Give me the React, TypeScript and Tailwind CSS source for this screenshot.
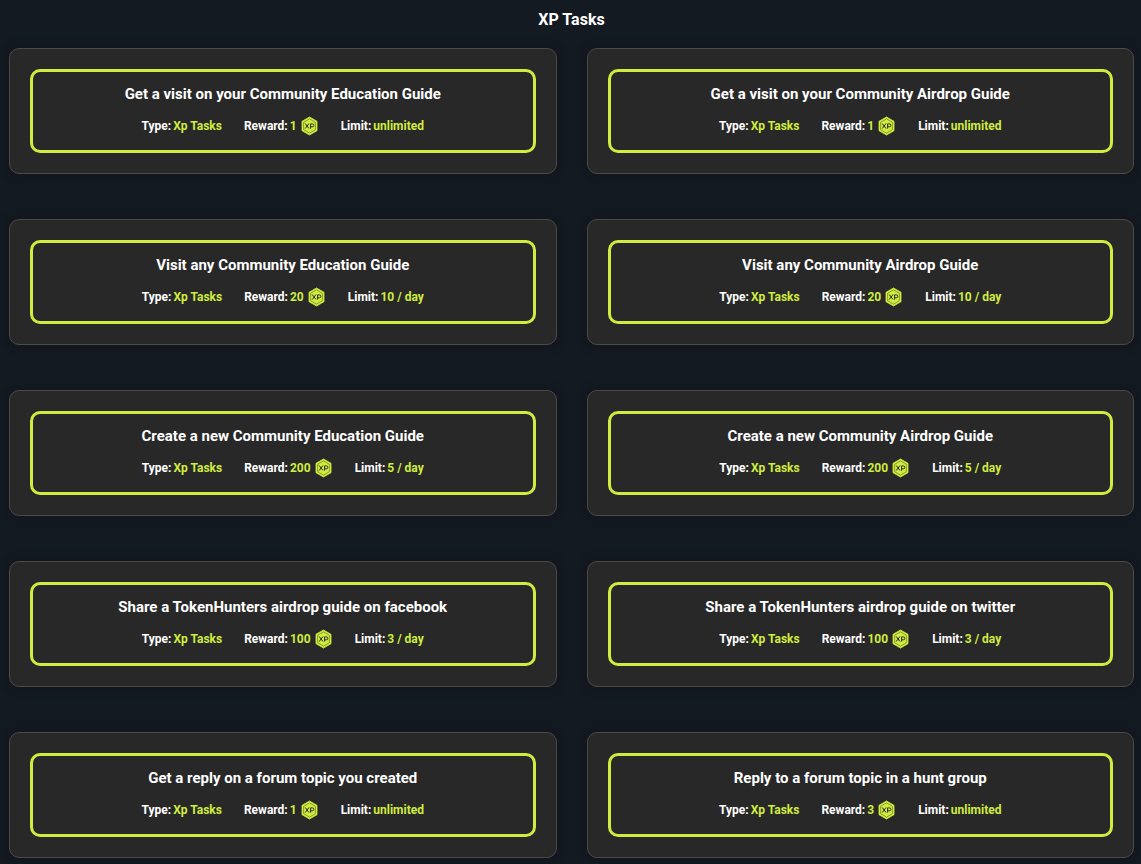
interface Task {
  title: string;
  reward: number;
  limit: string;
}

const tasks: Task[] = [
  { title: "Get a visit on your Community Education Guide", reward: 1, limit: "unlimited" },
  { title: "Get a visit on your Community Airdrop Guide", reward: 1, limit: "unlimited" },
  { title: "Visit any Community Education Guide", reward: 20, limit: "10 / day" },
  { title: "Visit any Community Airdrop Guide", reward: 20, limit: "10 / day" },
  { title: "Create a new Community Education Guide", reward: 200, limit: "5 / day" },
  { title: "Create a new Community Airdrop Guide", reward: 200, limit: "5 / day" },
  { title: "Share a TokenHunters airdrop guide on facebook", reward: 100, limit: "3 / day" },
  { title: "Share a TokenHunters airdrop guide on twitter", reward: 100, limit: "3 / day" },
  { title: "Get a reply on a forum topic you created", reward: 1, limit: "unlimited" },
  { title: "Reply to a forum topic in a hunt group", reward: 3, limit: "unlimited" },
];

function XpIcon() {
  return (
    <svg className="h-5 w-[18px]" viewBox="0 0 18 20" aria-label="XP" role="img">
      <path
        d="M8.5 1 L16 5.3 V14.7 L8.5 19 L1 14.7 V5.3 Z"
        fill="#d0ed3f"
        stroke="#d0ed3f"
        strokeWidth="0.8"
        strokeLinejoin="round"
      />
      <path d="M8.5 2.9 L14.4 6.3 V13.7 L8.5 17.1 L2.6 13.7 V6.3 Z" fill="none" stroke="#6b7a2c" strokeWidth="0.7" />
      {/* X */}
      <path d="M4.2 7.5 L8 12.5 M8 7.5 L4.2 12.5" fill="none" stroke="#282828" strokeWidth="1" />
      {/* P */}
      <path d="M9.6 12.6 V7.9 H11.4 A1.4 1.4 0 0 1 11.4 10.8 H9.6" fill="none" stroke="#282828" strokeWidth="1" />
    </svg>
  );
}

function TaskCard({ task }: { task: Task }) {
  return (
    <div className="rounded-[10px] border border-[#4b4a45] bg-[#282828] p-5 shadow-[0_0_10px_rgba(16,16,28,0.7)]">
      <div className="rounded-[10px] border-3 border-[#d0ed3f] px-4 pt-2.5 pb-3 text-center">
        <h2 className="text-[15px] leading-6 font-bold">{task.title}</h2>
        <div className="mt-2 flex h-6 items-center justify-center gap-[22px] text-[12px] leading-5 font-bold">
          <p className="flex gap-0.5">
            Type:<span className="text-[#d0ed3f]">Xp Tasks</span>
          </p>
          <p className="flex items-center gap-0.5">
            Reward:
            <span className="flex items-center gap-1 text-[#d0ed3f]">
              {task.reward}
              <XpIcon />
            </span>
          </p>
          <p className="flex gap-0.5">
            Limit:<span className="text-[#d0ed3f]">{task.limit}</span>
          </p>
        </div>
      </div>
    </div>
  );
}

export default function App() {
  return (
    <main className="min-h-screen bg-[#141a21] pt-2 pr-[7px] pb-[6px] pl-[9px] font-['Roboto',sans-serif] text-white">
      <h1 className="text-center text-base leading-6 font-bold">XP Tasks</h1>
      <div className="mt-4 grid grid-cols-2 gap-x-[30px] gap-y-[45px]">
        {tasks.map((task) => (
          <TaskCard key={task.title} task={task} />
        ))}
      </div>
    </main>
  );
}
